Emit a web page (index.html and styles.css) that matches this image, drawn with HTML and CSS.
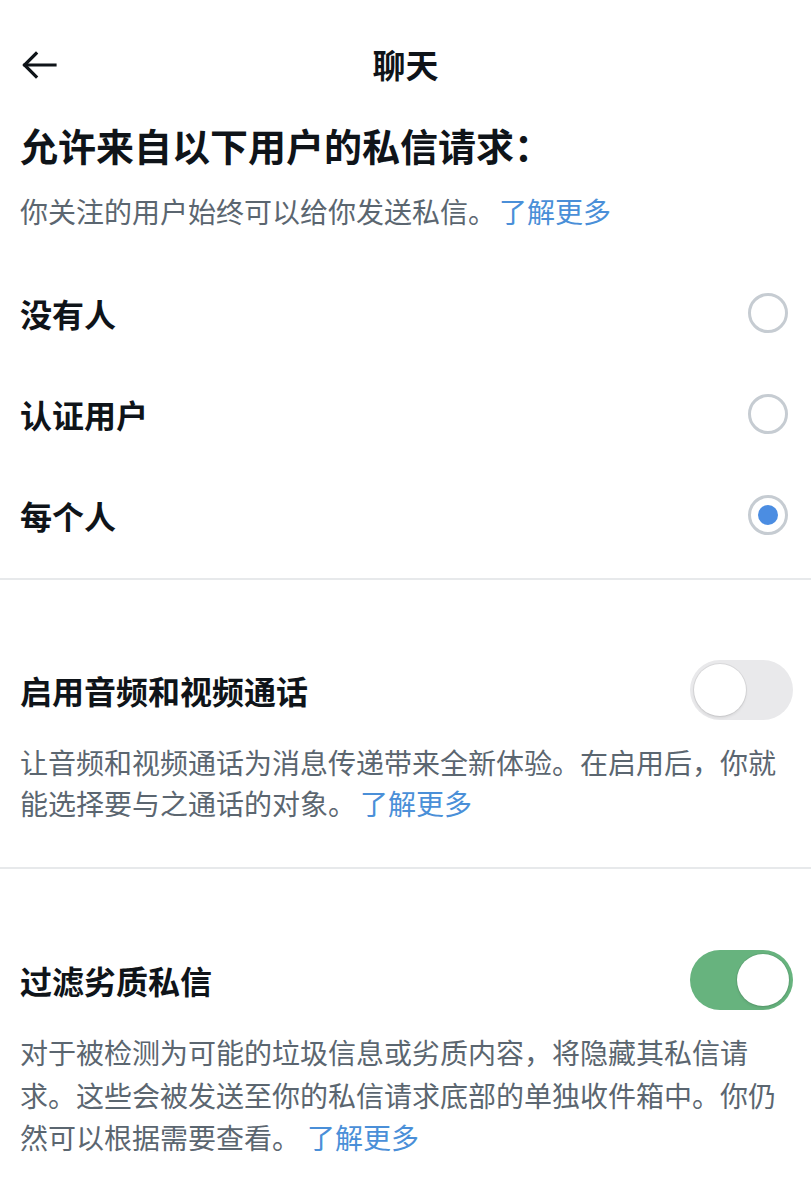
FILE: index.html
```html
<!DOCTYPE html>
<html lang="zh-CN">
<head>
<meta charset="utf-8">
<title>聊天</title>
<link rel="stylesheet" href="styles.css">
</head>
<body>
<header class="topbar">
  <span class="back">
    <svg width="36" height="28" viewBox="0 0 36 28" fill="none" stroke="#0f1419" stroke-width="3.2" stroke-linecap="square">
      <path d="M4 14 H34"/>
      <path d="M15 2.5 L3.5 14 L15 25.5" stroke-linejoin="miter"/>
    </svg>
  </span>
  <h1 class="title">聊天</h1>
</header>

<section class="requests">
  <h2 class="heading">允许来自以下用户的私信请求：</h2>
  <p class="sub">你关注的用户始终可以给你发送私信。<a class="link">了解更多</a></p>
  <ul class="options">
    <li class="option"><span class="label">没有人</span><span class="radio"></span></li>
    <li class="option"><span class="label">认证用户</span><span class="radio"></span></li>
    <li class="option"><span class="label">每个人</span><span class="radio checked"></span></li>
  </ul>
</section>
<hr class="divider">

<section class="setting s-calls">
  <div class="row">
    <span class="label">启用音频和视频通话</span>
    <span class="toggle"><span class="knob"></span></span>
  </div>
  <p class="desc">让音频和视频通话为消息传递带来全新体验。在启用后，你就能选择要与之通话的对象。<a class="link">了解更多</a></p>
</section>
<hr class="divider">

<section class="setting s-filter">
  <div class="row">
    <span class="label">过滤劣质私信</span>
    <span class="toggle on"><span class="knob"></span></span>
  </div>
  <p class="desc desc3">对于被检测为可能的垃圾信息或劣质内容，将隐藏其私信请求。这些会被发送至你的私信请求底部的单独收件箱中。你仍然可以根据需要查看。<a class="link">了解更多</a></p>
</section>
</body>
</html>
```

FILE: styles.css
```css
* { box-sizing: border-box; }
html, body {
  margin: 0;
  padding: 0;
  background: #ffffff;
}
body {
  font-family: "Noto Sans CJK SC", "Noto Sans", sans-serif;
  color: #0f1419;
  width: 811px;
}
.topbar {
  height: 127px;
  display: flex;
  align-items: center;
  justify-content: center;
  position: relative;
}
.back {
  position: absolute;
  left: 21px;
  top: 51px;
  width: 36px;
  height: 28px;
  display: block;
}
.back svg { display: block; }
.title {
  margin: 0;
  font-size: 33px;
  line-height: 40px;
  font-weight: 700;
}
.requests { padding: 0 20px; }
.heading {
  margin: 0;
  font-size: 38px;
  line-height: 36px;
  font-weight: 700;
}
.sub {
  margin: 28px 0 0;
  font-size: 28px;
  line-height: 40px;
  color: #5b6670;
}
.link {
  color: #4a8fd8;
  margin-left: 3px;
}
.desc .link { margin-left: 4px; }
.desc3 .link { margin-left: 7px; }
.options {
  list-style: none;
  margin: 31px 0 0;
  padding: 0;
}
.option {
  height: 101px;
  display: flex;
  align-items: center;
  justify-content: space-between;
}
.label {
  font-size: 32px;
  line-height: 40px;
  font-weight: 700;
}
.radio {
  width: 40px;
  height: 40px;
  border: 3px solid #c6ccd2;
  border-radius: 50%;
  margin-right: 3px;
  display: flex;
  align-items: center;
  justify-content: center;
}
.radio.checked::after {
  content: "";
  width: 20px;
  height: 20px;
  border-radius: 50%;
  background: #4b8de2;
}
.divider {
  margin: 13px 0 0;
  border: 0;
  height: 2px;
  background: #e7e9eb;
}
.setting { padding: 80px 20px 0; }
.s-filter { padding-top: 81px; }
.row {
  height: 60px;
  display: flex;
  align-items: center;
  justify-content: space-between;
}
.toggle {
  width: 103px;
  height: 60px;
  border-radius: 30px;
  background: #e9e9eb;
  padding: 4px;
  margin-right: -2px;
  display: flex;
  justify-content: flex-start;
}
.toggle.on {
  background: #67b37e;
  justify-content: flex-end;
}
.knob {
  width: 52px;
  height: 52px;
  border-radius: 50%;
  background: #ffffff;
  box-shadow: 0 0 0 1px rgba(0,0,0,0.07), 0 2px 3px rgba(0,0,0,0.08);
}
.desc {
  margin: 22px 0 0;
  font-size: 28px;
  line-height: 41px;
  color: #5b6670;
}
.s-calls .desc { margin-bottom: 43px; }
.desc3 {
  margin-top: 21px;
  line-height: 42.5px;
}
```
